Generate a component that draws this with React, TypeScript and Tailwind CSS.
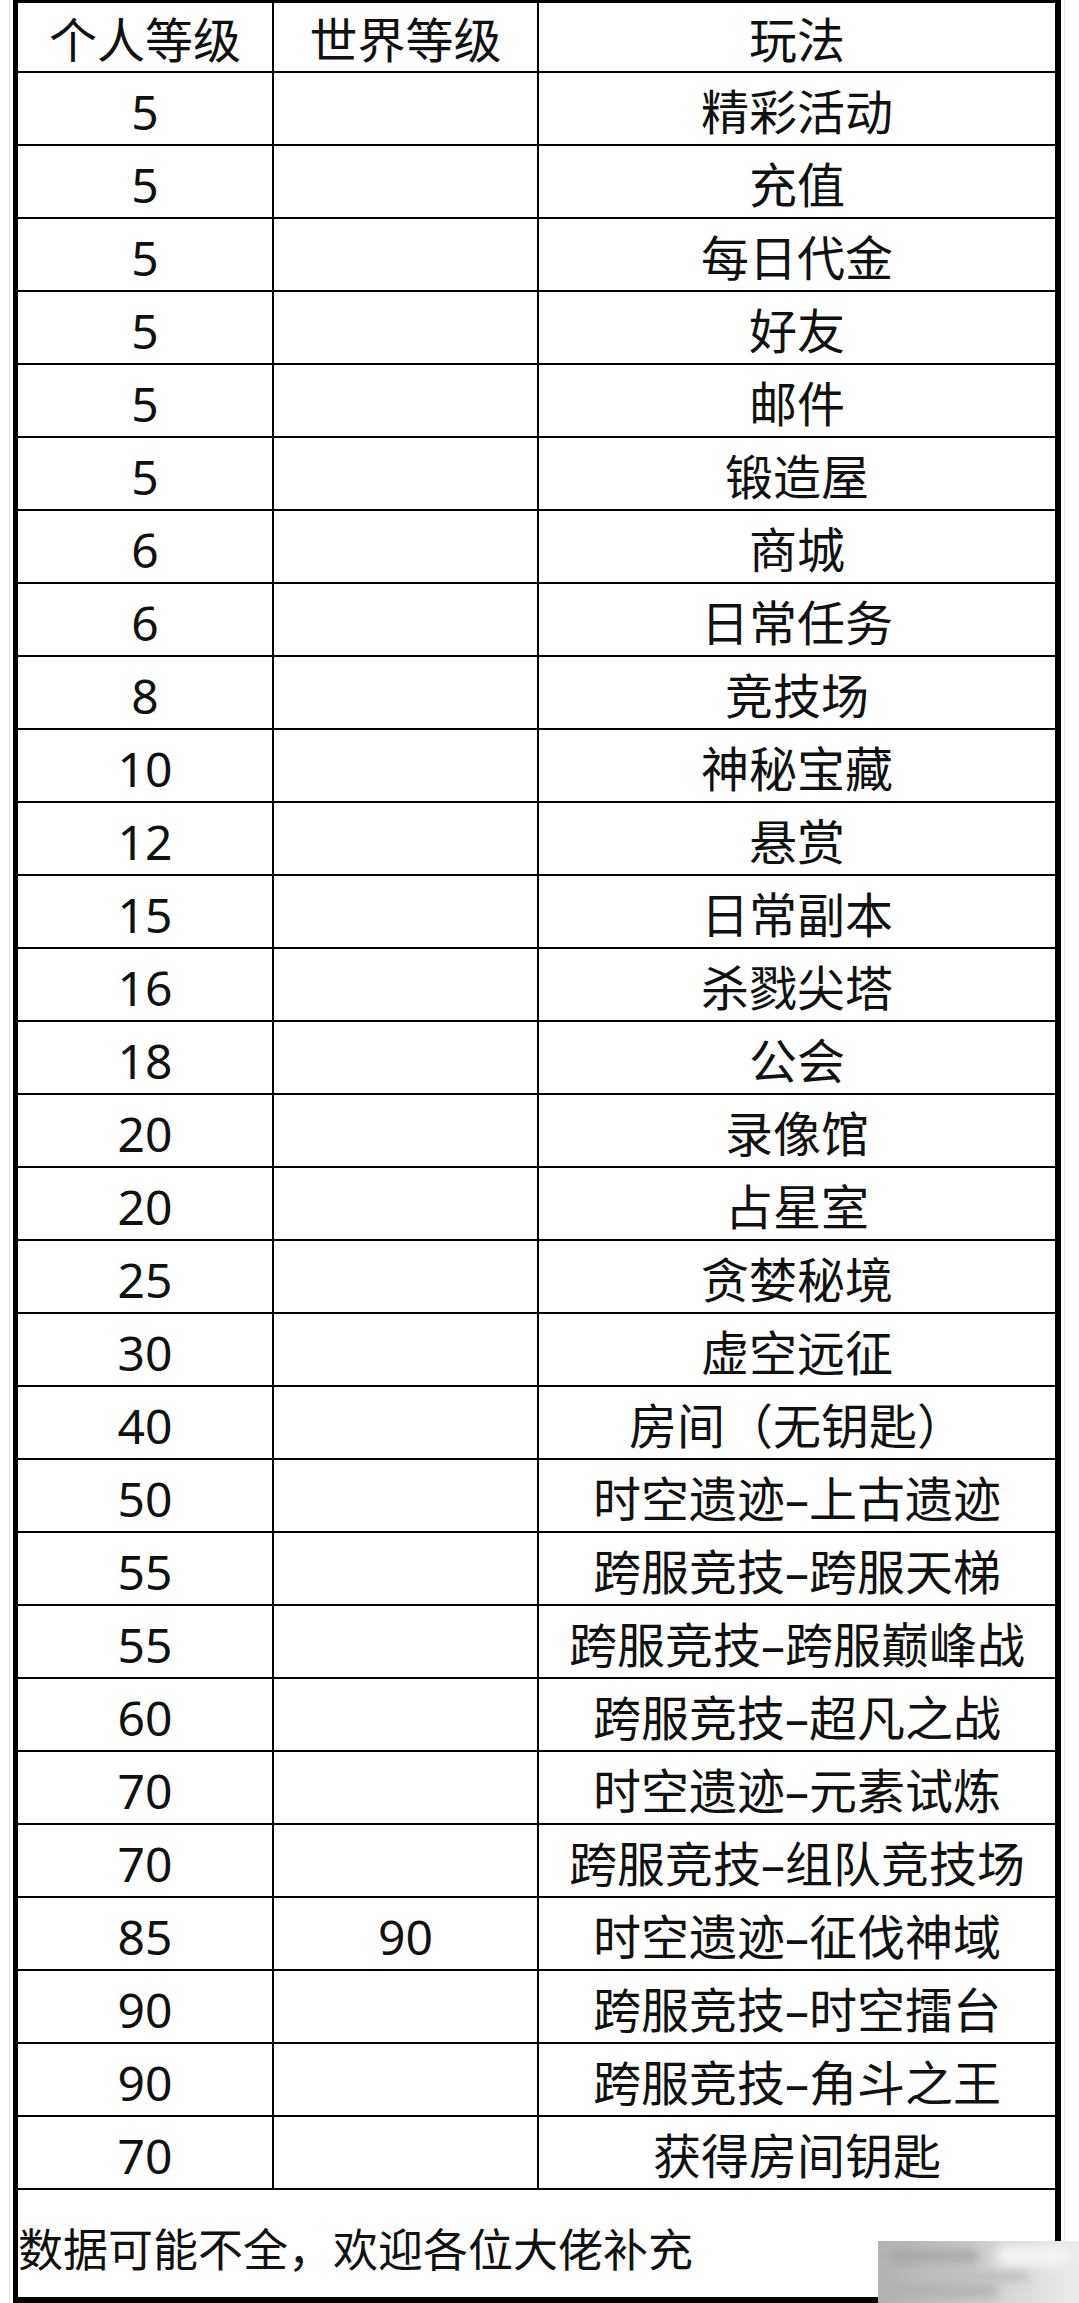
import React from 'react';

const rows: [string, string, string][] = [
  ['5', '', '精彩活动'],
  ['5', '', '充值'],
  ['5', '', '每日代金'],
  ['5', '', '好友'],
  ['5', '', '邮件'],
  ['5', '', '锻造屋'],
  ['6', '', '商城'],
  ['6', '', '日常任务'],
  ['8', '', '竞技场'],
  ['10', '', '神秘宝藏'],
  ['12', '', '悬赏'],
  ['15', '', '日常副本'],
  ['16', '', '杀戮尖塔'],
  ['18', '', '公会'],
  ['20', '', '录像馆'],
  ['20', '', '占星室'],
  ['25', '', '贪婪秘境'],
  ['30', '', '虚空远征'],
  ['40', '', '房间（无钥匙）'],
  ['50', '', '时空遗迹–上古遗迹'],
  ['55', '', '跨服竞技–跨服天梯'],
  ['55', '', '跨服竞技–跨服巅峰战'],
  ['60', '', '跨服竞技–超凡之战'],
  ['70', '', '时空遗迹–元素试炼'],
  ['70', '', '跨服竞技–组队竞技场'],
  ['85', '90', '时空遗迹–征伐神域'],
  ['90', '', '跨服竞技–时空擂台'],
  ['90', '', '跨服竞技–角斗之王'],
  ['70', '', '获得房间钥匙'],
];

function Row({ cells, header }: { cells: [string, string, string]; header?: boolean }) {
  return (
    <div className={`flex border-b-2 border-black ${header ? 'h-[70px]' : 'h-[73px]'}`}>
      <div className="w-[256px] shrink-0 border-r-2 border-black flex items-center justify-center pt-[6px]">
        {cells[0]}
      </div>
      <div className="w-[265px] shrink-0 border-r-2 border-black flex items-center justify-center pt-[6px]">
        {cells[1]}
      </div>
      <div className="flex-1 flex items-center justify-center pt-[6px]">{cells[2]}</div>
    </div>
  );
}

export default function App() {
  return (
    <div
      className="relative w-[1079px] h-[2303px] bg-white overflow-hidden text-[#111] text-[48px] leading-none"
      style={{ fontFamily: '"Noto Sans", "Noto Sans CJK SC", sans-serif' }}
    >
      {/* 左右两侧的浅灰细线 */}
      <div className="flex h-full">
        <div className="w-[10px] shrink-0 border-r border-[#e4e4e4]" />
        <div className="ml-[3px] w-[1048px] shrink-0 h-full flex flex-col border-l-[5px] border-r-[6px] border-t-[3px] border-b-[6px] border-black">
          <Row cells={['个人等级', '世界等级', '玩法']} header />
          {rows.map((r, i) => (
            <Row key={i} cells={r} />
          ))}
          {/* 备注 */}
          <div className="flex-1 flex items-center pt-[12px] text-[45px]">数据可能不全，欢迎各位大佬补充</div>
        </div>
        <div className="w-[4px] shrink-0 border-r border-[#e8e8e8]" />
      </div>

      {/* 右下角水印 */}
      <div className="absolute right-0 bottom-0 w-[201px] h-[62px] overflow-hidden bg-gradient-to-r from-[#b3b3b3] via-[#cfcfcf] to-[#ececec]">
        <div className="absolute left-[10px] top-[8px] w-[90px] h-[14px] bg-[#a5a5a5] blur-[6px]" />
        <div className="absolute left-[40px] top-[30px] w-[110px] h-[10px] bg-[#bdbdbd] blur-[5px]" />
        <div className="absolute left-[120px] top-[5px] w-[70px] h-[20px] bg-[#f4f4f4] blur-[6px]" />
        <div className="absolute left-[0px] top-[44px] w-[120px] h-[12px] bg-[#afafaf] blur-[6px]" />
      </div>
    </div>
  );
}
